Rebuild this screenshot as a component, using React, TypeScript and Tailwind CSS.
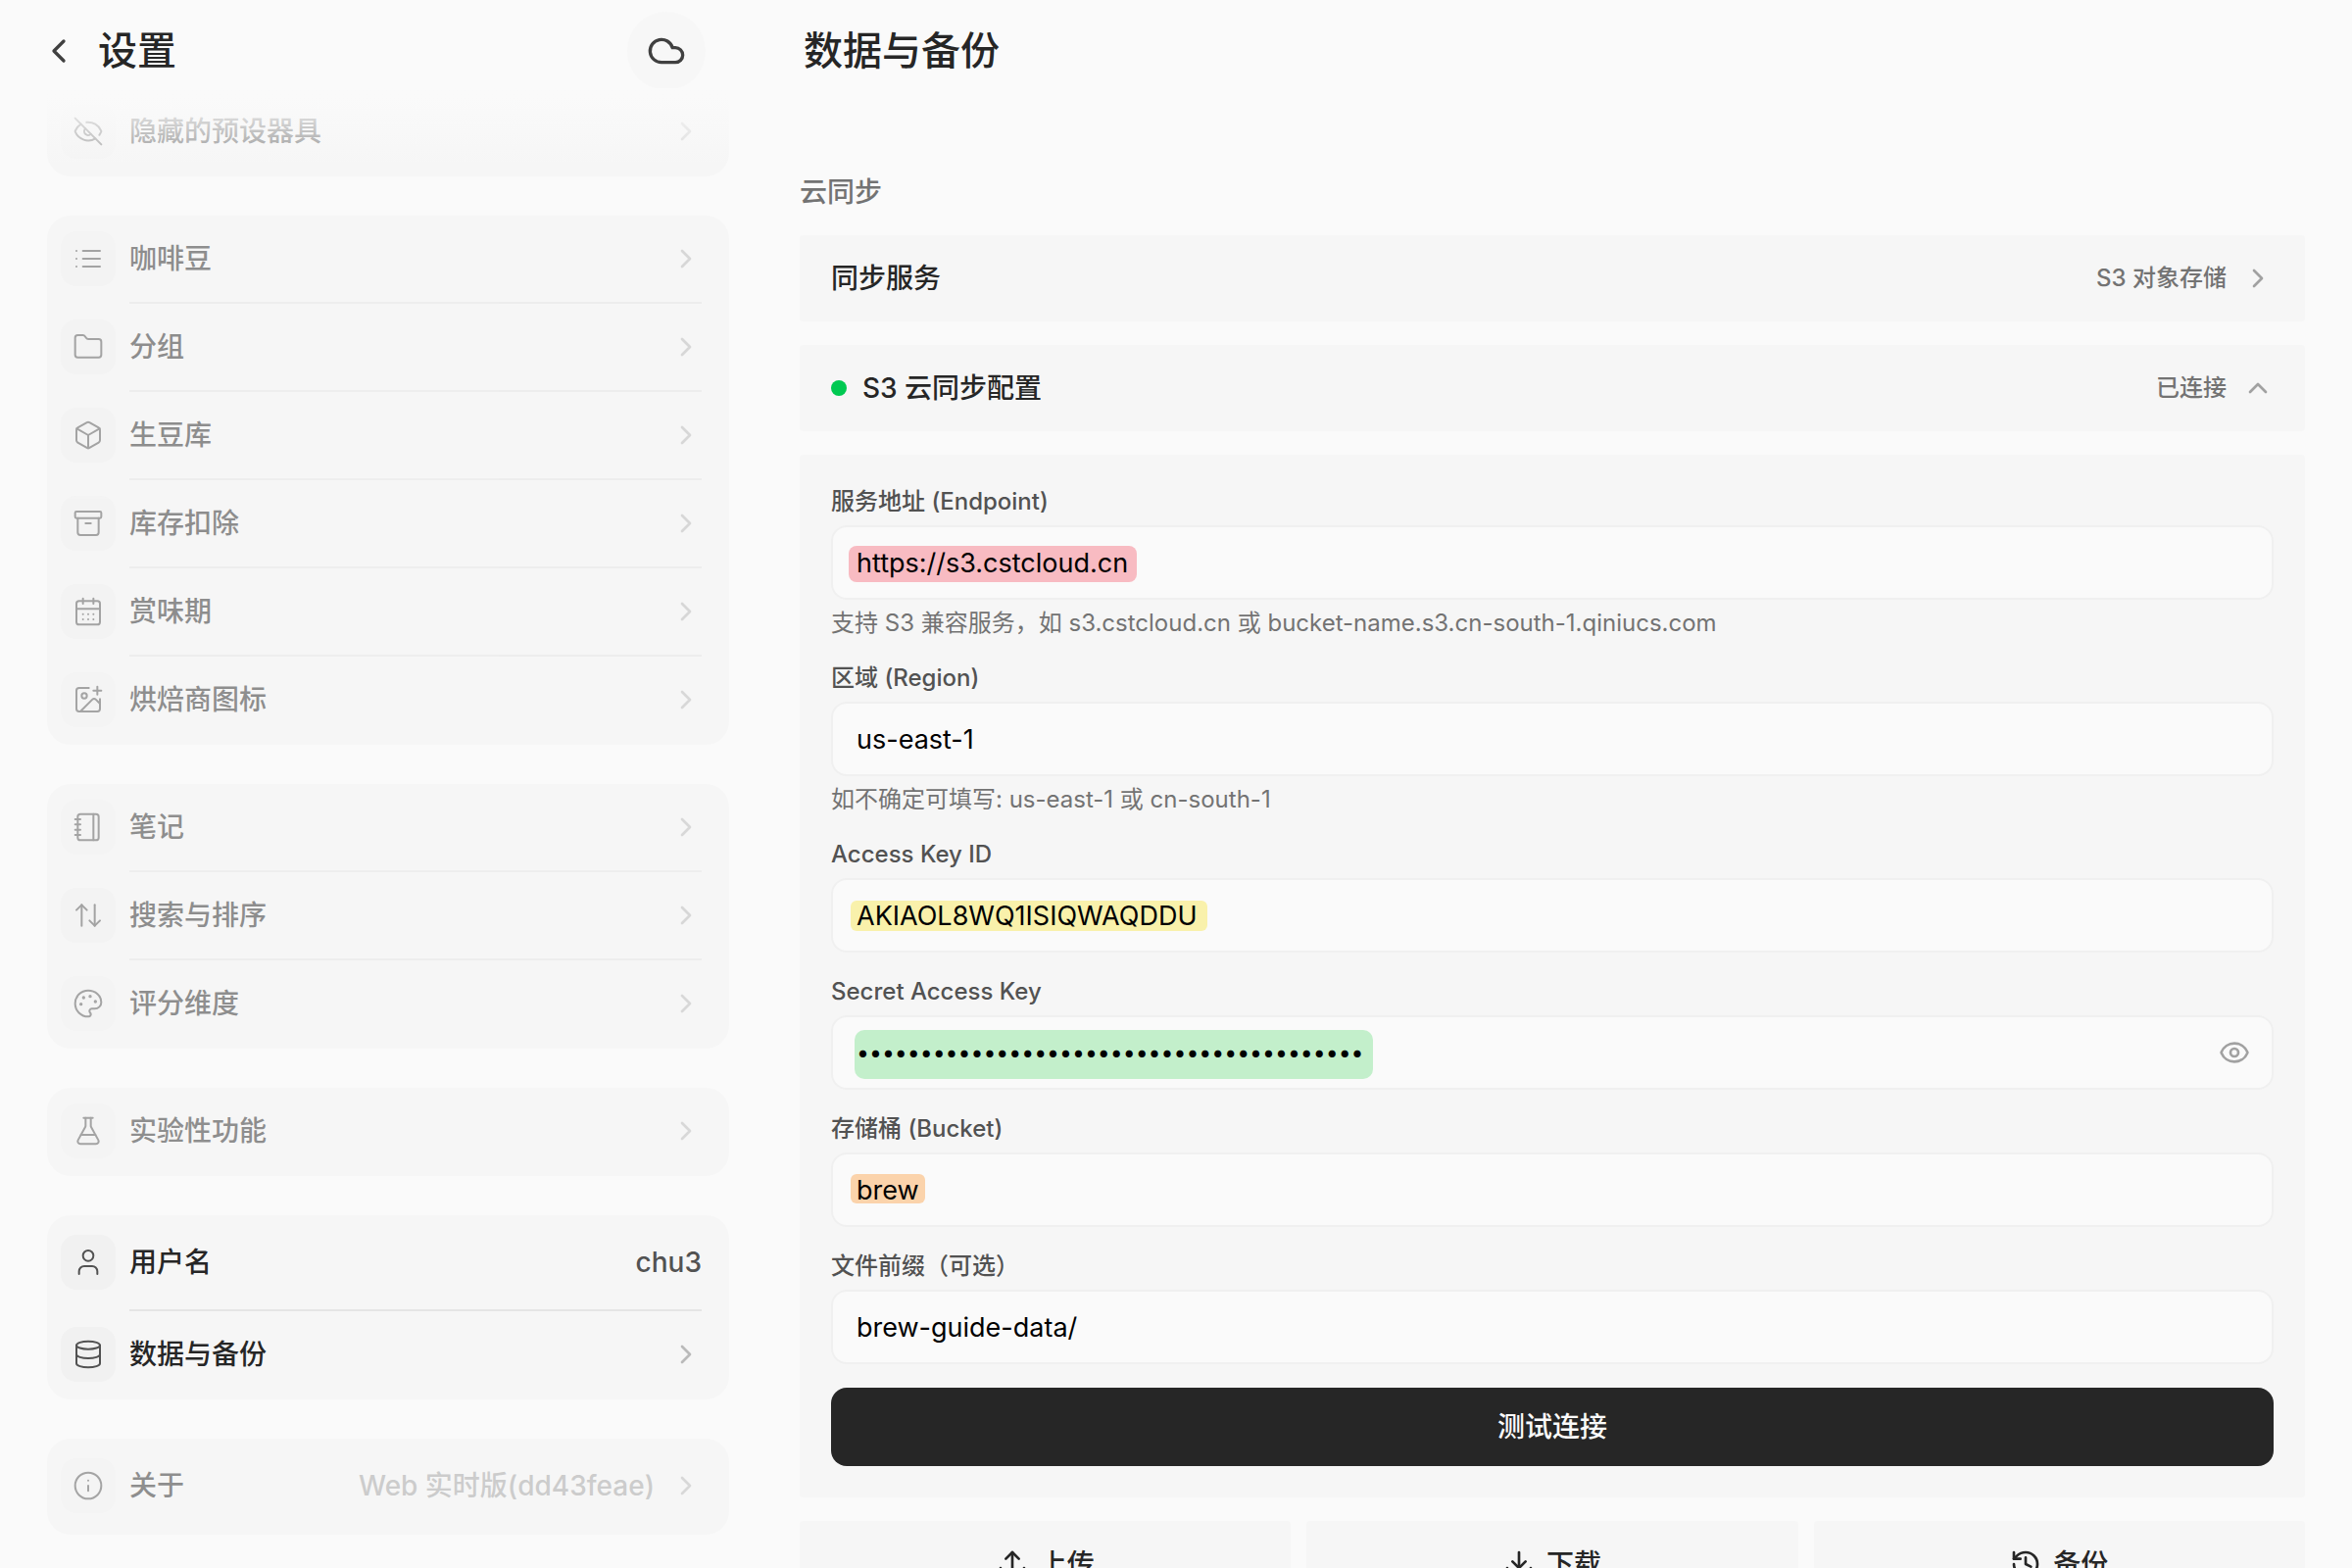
import type { ComponentType, ReactNode } from "react";
import {
  Archive,
  ArrowUpDown,
  Box,
  CalendarDays,
  ChevronLeft,
  ChevronRight,
  ChevronUp,
  Cloud,
  Database,
  Download,
  Eye,
  EyeOff,
  FlaskConical,
  Folder,
  History,
  ImagePlus,
  Info,
  Notebook,
  Palette,
  Upload,
  User,
} from "lucide-react";

type IconType = ComponentType<{ className?: string; strokeWidth?: number }>;

function ListIcon({ className, strokeWidth = 2 }: { className?: string; strokeWidth?: number }) {
  return (
    <svg
      className={className}
      viewBox="0 0 24 24"
      fill="none"
      stroke="currentColor"
      strokeWidth={strokeWidth}
      strokeLinecap="round"
      strokeLinejoin="round"
    >
      <path d="M3 6h.01M3 12h.01M3 18h.01M8 6h13M8 12h13M8 18h13" />
    </svg>
  );
}

type Item = { icon: IconType; label: string; value?: string };

const groups: Item[][] = [
  [
    { icon: ListIcon, label: "咖啡豆" },
    { icon: Folder, label: "分组" },
    { icon: Box, label: "生豆库" },
    { icon: Archive, label: "库存扣除" },
    { icon: CalendarDays, label: "赏味期" },
    { icon: ImagePlus, label: "烘焙商图标" },
  ],
  [
    { icon: Notebook, label: "笔记" },
    { icon: ArrowUpDown, label: "搜索与排序" },
    { icon: Palette, label: "评分维度" },
  ],
  [{ icon: FlaskConical, label: "实验性功能" }],
];

function IconTile({ icon: Icon }: { icon: IconType }) {
  return (
    <span className="flex size-14 shrink-0 items-center justify-center rounded-2xl bg-[#f1f1f1] text-neutral-600">
      <Icon className="size-8" strokeWidth={1.5} />
    </span>
  );
}

function MenuRow({ item, dim, last, tall }: { item: Item; dim?: boolean; last?: boolean; tall?: boolean }) {
  return (
    <button
      type="button"
      className={`flex w-full items-stretch gap-3.5 pr-7 pl-3.5 text-left ${dim ? "opacity-50" : ""}`}
    >
      <span className="flex items-center pb-0.5">
        <IconTile icon={item.icon} />
      </span>
      <span
        className={`flex flex-1 items-center gap-4 border-b-2 ${tall ? "h-[98px]" : "h-[90px]"} ${
          last ? "border-transparent" : "border-neutral-200"
        }`}
      >
        <span className="flex-1 text-[28px] leading-10 font-medium text-neutral-800">{item.label}</span>
        {item.value && (
          <span className="text-[28px] leading-10 font-medium text-neutral-400">{item.value}</span>
        )}
        <ChevronRight className="size-8 text-[#bababa]" strokeWidth={2} />
      </span>
    </button>
  );
}

function Card({ children }: { children: ReactNode }) {
  return <div className="overflow-hidden rounded-3xl bg-[#f6f6f6]">{children}</div>;
}

function Sidebar() {
  return (
    <aside className="flex w-[33%] shrink-0 flex-col">
      <header className="flex h-[104px] shrink-0 items-center gap-5 pr-[72px] pl-10">
        <button type="button" aria-label="返回" className="text-neutral-700">
          <ChevronLeft className="size-10" />
        </button>
        <h1 className="flex-1 text-[40px] leading-[52px] font-medium text-neutral-800">设置</h1>
        <button
          type="button"
          aria-label="云同步"
          className="flex size-20 items-center justify-center rounded-full bg-[#f7f7f7] text-neutral-700"
        >
          <Cloud className="size-10" />
        </button>
      </header>

      <nav className="relative -mt-3.5 flex flex-1 flex-col gap-10 px-12">
        <div className="relative">
          <div className="overflow-hidden rounded-b-3xl bg-[#f6f6f6]">
            <MenuRow item={{ icon: EyeOff, label: "隐藏的预设器具" }} dim last />
          </div>
          <div className="pointer-events-none absolute inset-x-0 top-0 h-20 bg-linear-to-b from-neutral-50 from-10% to-transparent" />
        </div>

        {groups.map((group) => (
          <Card key={group[0].label}>
            {group.map((item, i) => (
              <MenuRow key={item.label} item={item} dim last={i === group.length - 1} />
            ))}
          </Card>
        ))}

        <Card>
          <label className="flex w-full items-stretch gap-3.5 pr-7 pl-3.5">
            <span className="flex items-center pb-0.5">
              <IconTile icon={User} />
            </span>
            <span className="flex h-[98px] flex-1 items-center gap-4 border-b-2 border-neutral-200">
              <span className="flex-1 text-[28px] leading-10 font-medium text-neutral-800">用户名</span>
              <input
                type="text"
                defaultValue="chu3"
                className="w-60 bg-transparent text-right text-[28px] leading-10 font-medium text-neutral-600 outline-none"
              />
            </span>
          </label>
          <MenuRow item={{ icon: Database, label: "数据与备份" }} last />
        </Card>

        <Card>
          <MenuRow item={{ icon: Info, label: "关于", value: "Web 实时版(dd43feae)" }} dim last tall />
        </Card>
      </nav>
    </aside>
  );
}

type FieldProps = {
  id: string;
  label: string;
  value: string;
  type?: "text" | "password";
  hint?: string;
  highlight?: string;
  action?: ReactNode;
};

function Field({ id, label, value, type = "text", hint, highlight, action }: FieldProps) {
  return (
    <div className="flex flex-col gap-2">
      <label htmlFor={id} className="text-2xl leading-8 font-medium text-neutral-600">
        {label}
      </label>
      <div className="relative flex h-[76px] items-center rounded-2xl border-2 border-[#f0f0f0] bg-neutral-50">
        {highlight && <span className={`absolute ${highlight}`} />}
        <input
          id={id}
          type={type}
          defaultValue={value}
          className={`relative h-full min-w-0 flex-1 bg-transparent px-6 leading-10 text-black outline-none ${
            type === "password" ? "text-[23px]" : "text-[27px]"
          }`}
        />
        {action}
      </div>
      {hint && <p className="text-2xl leading-8 text-neutral-500">{hint}</p>}
    </div>
  );
}

function ActionButton({ icon: Icon, label }: { icon: IconType; label: string }) {
  return (
    <button
      type="button"
      className="flex h-22 flex-1 items-center justify-center gap-3 rounded bg-[#f6f6f6] text-[28px] leading-10 font-medium text-neutral-800"
    >
      <Icon className="size-8" />
      {label}
    </button>
  );
}

function DataPanel() {
  return (
    <main className="flex min-w-0 flex-1 flex-col pr-12 pl-6">
      <header className="flex h-[104px] shrink-0 items-center pl-1">
        <h2 className="text-[40px] leading-[52px] font-medium text-neutral-800">数据与备份</h2>
      </header>

      <section className="mt-[72px] flex flex-col gap-6">
        <h3 className="text-[28px] leading-10 font-medium text-neutral-500">云同步</h3>

        <button type="button" className="flex h-22 items-center gap-4 rounded bg-[#f6f6f6] px-8 text-left">
          <span className="flex-1 text-[28px] leading-10 font-medium text-neutral-800">同步服务</span>
          <span className="text-2xl leading-8 font-medium text-neutral-500">S3 对象存储</span>
          <ChevronRight className="size-8 text-neutral-400" />
        </button>

        <button
          type="button"
          aria-expanded="true"
          className="flex h-22 items-center gap-4 rounded bg-[#f6f6f6] px-8 text-left"
        >
          <span className="size-4 rounded-full bg-green-500" />
          <span className="flex-1 text-[28px] leading-10 font-medium text-neutral-800">S3 云同步配置</span>
          <span className="text-2xl leading-8 font-medium text-neutral-500">已连接</span>
          <ChevronUp className="size-8 text-neutral-400" />
        </button>

        <form className="flex flex-col gap-6 rounded bg-[#f6f6f6] p-8">
          <Field
            id="endpoint"
            label="服务地址 (Endpoint)"
            value="https://s3.cstcloud.cn"
            hint="支持 S3 兼容服务，如 s3.cstcloud.cn 或 bucket-name.s3.cn-south-1.qiniucs.com"
            highlight="top-[19px] left-4 h-[37px] w-[294px] rounded-lg bg-[#f8bbc2]"
          />
          <Field
            id="region"
            label="区域 (Region)"
            value="us-east-1"
            hint="如不确定可填写: us-east-1 或 cn-south-1"
          />
          <Field
            id="access-key"
            label="Access Key ID"
            value="AKIAOL8WQ1ISIQWAQDDU"
            highlight="top-[21px] left-[18px] h-[31px] w-[364px] rounded-md bg-[#f9f1ab]"
          />
          <Field
            id="secret-key"
            label="Secret Access Key"
            type="password"
            value="0123456789012345678901234567890123456789"
            highlight="top-[13px] left-[22px] h-[50px] w-[529px] rounded-[10px] bg-[#c3efcb]"
            action={
              <button type="button" aria-label="显示密钥" className="relative mr-[22px] text-neutral-400">
                <Eye className="size-8" />
              </button>
            }
          />
          <Field
            id="bucket"
            label="存储桶 (Bucket)"
            value="brew"
            highlight="top-[20px] left-[18px] h-[30px] w-[76px] rounded-md bg-[#fbd3ab]"
          />
          <Field id="prefix" label="文件前缀（可选）" value="brew-guide-data/" />
          <button
            type="button"
            className="h-20 rounded-2xl bg-neutral-800 text-[28px] leading-10 font-medium text-neutral-50"
          >
            测试连接
          </button>
        </form>

        <div className="flex gap-4">
          <ActionButton icon={Upload} label="上传" />
          <ActionButton icon={Download} label="下载" />
          <ActionButton icon={History} label="备份" />
        </div>
      </section>
    </main>
  );
}

export default function App() {
  return (
    <div
      lang="zh-CN"
      className="flex h-screen overflow-hidden bg-neutral-50 font-['Inter','Noto_Sans_CJK_SC',sans-serif] antialiased"
    >
      <Sidebar />
      <DataPanel />
    </div>
  );
}
